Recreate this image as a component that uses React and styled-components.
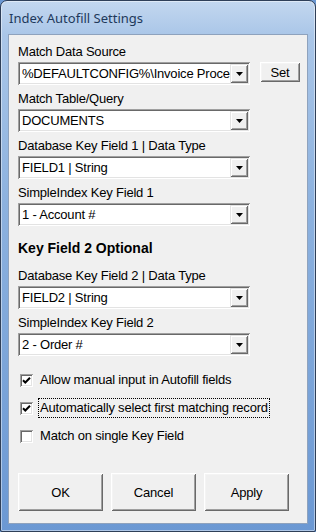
import React from "react";
import styled, { createGlobalStyle } from "styled-components";

const Global = createGlobalStyle`
  html, body { margin: 0; padding: 0; background: #6b98d3; }
  body { font-family: "Liberation Sans", Arial, sans-serif; }
  * { box-sizing: border-box; }
`;

const Window = styled.div`
  width: 316px;
  height: 532px;
  display: flex;
  flex-direction: column;
  border: 1px solid #2f3f58;
  border-radius: 7px 7px 2px 2px;
  background: linear-gradient(to bottom, #c3d7ef 0px, #aac6e8 34px, #8db2df 200px, #6b98d3 532px);
  box-shadow: inset 0 0 0 1px rgba(255, 255, 255, 0.45);
  padding: 0 7px 7px 7px;
  overflow: hidden;
`;

const TitleBar = styled.div`
  height: 33px;
  display: flex;
  align-items: center;
  padding-left: 1px;
  font-family: "Noto Sans", "Open Sans", sans-serif;
  font-size: 13px;
  color: #1e395b;
`;

const Client = styled.div`
  flex: 1;
  display: flex;
  flex-direction: column;
  background: #f0f0f0;
  border: 1px solid #8ea2bd;
  padding: 9px 9px 11px 9px;
  font-size: 13px;
  letter-spacing: -0.2px;
  color: #000;
`;

const Field = styled.div`
  display: flex;
  flex-direction: column;
  margin-top: ${(p) => p.$top ?? 6}px;
`;

const Label = styled.div`
  height: 15px;
  line-height: 15px;
  margin-bottom: 3px;
  white-space: nowrap;
`;

const Heading = styled.div`
  margin-top: 14px;
  height: 16px;
  line-height: 16px;
  font-weight: bold;
  font-size: 14px;
  letter-spacing: 0;
`;

const Row = styled.div`
  display: flex;
  align-items: flex-start;
  gap: 10px;
`;

const ComboBox = styled.div`
  width: 232px;
  height: 23px;
  display: flex;
  padding: 2px;
  background: #fff;
  box-shadow: inset 1px 1px #a0a0a0, inset -1px -1px #ffffff, inset 2px 2px #696969,
    inset -2px -2px #e3e3e3;
`;

const ComboValue = styled.div`
  flex: 1;
  min-width: 0;
  overflow: hidden;
  white-space: nowrap;
  line-height: 19px;
  padding-left: 2px;
`;

const DropButton = styled.div`
  width: 18px;
  height: 19px;
  flex: none;
  display: flex;
  align-items: center;
  justify-content: center;
  background: #f0f0f0;
  box-shadow: inset 1px 1px #e3e3e3, inset -1px -1px #696969, inset 2px 2px #ffffff,
    inset -2px -2px #a0a0a0;
`;

const PushButton = styled.div`
  width: ${(p) => p.$w}px;
  height: ${(p) => p.$h}px;
  flex: none;
  display: flex;
  align-items: center;
  justify-content: center;
  background: #f0f0f0;
  box-shadow: inset 1px 1px #ffffff, inset -1px -1px #696969, inset 2px 2px #f4f4f4,
    inset -2px -2px #a0a0a0;
`;

const Checks = styled.div`
  display: flex;
  flex-direction: column;
  gap: 8px;
  margin-top: 14px;
`;

const CheckRow = styled.div`
  height: 20px;
  display: flex;
  align-items: center;
`;

const Box = styled.div`
  width: 13px;
  height: 13px;
  margin-left: 2px;
  background: #fff;
  display: flex;
  align-items: center;
  justify-content: center;
  box-shadow: inset 1px 1px #a0a0a0, inset -1px -1px #ffffff, inset 2px 2px #696969,
    inset -2px -2px #e3e3e3;
`;

const CheckText = styled.span`
  margin-left: 5px;
  padding: 0 1px;
  height: 20px;
  line-height: 18px;
  border: 1px dotted ${(p) => (p.$focus ? "#000" : "transparent")};
  white-space: nowrap;
`;

const Buttons = styled.div`
  display: flex;
  gap: 8px;
  margin-top: 27px;
`;

const Arrow = () => (
  <svg width="7" height="4" viewBox="0 0 7 4">
    <path d="M0 0H7L3.5 4Z" fill="#000" />
  </svg>
);

const Check = () => (
  <svg width="9" height="9" viewBox="0 0 9 9">
    <path d="M1 4.2L3.3 6.5L8 1.8" fill="none" stroke="#000" strokeWidth="2" />
  </svg>
);

const Combo = ({ value }) => (
  <ComboBox>
    <ComboValue>{value}</ComboValue>
    <DropButton>
      <Arrow />
    </DropButton>
  </ComboBox>
);

const CheckItem = ({ checked, focus, children }) => (
  <CheckRow>
    <Box>{checked && <Check />}</Box>
    <CheckText $focus={focus}>{children}</CheckText>
  </CheckRow>
);

export default function App() {
  return (
    <>
      <Global />
      <Window>
        <TitleBar>Index Autofill Settings</TitleBar>
        <Client>
          <Field $top={0}>
            <Label>Match Data Source</Label>
            <Row>
              <Combo value="%DEFAULTCONFIG%\Invoice Proces" />
              <PushButton $w={40} $h={20}>Set</PushButton>
            </Row>
          </Field>
          <Field>
            <Label>Match Table/Query</Label>
            <Combo value="DOCUMENTS" />
          </Field>
          <Field>
            <Label>Database Key Field 1 | Data Type</Label>
            <Combo value="FIELD1 | String" />
          </Field>
          <Field>
            <Label>SimpleIndex Key Field 1</Label>
            <Combo value="1 - Account #" />
          </Field>
          <Heading>Key Field 2 Optional</Heading>
          <Field $top={12}>
            <Label>Database Key Field 2 | Data Type</Label>
            <Combo value="FIELD2 | String" />
          </Field>
          <Field>
            <Label>SimpleIndex Key Field 2</Label>
            <Combo value="2 - Order #" />
          </Field>
          <Checks>
            <CheckItem checked>Allow manual input in Autofill fields</CheckItem>
            <CheckItem checked focus>Automatically select first matching record</CheckItem>
            <CheckItem>Match on single Key Field</CheckItem>
          </Checks>
          <Buttons>
            <PushButton $w={85} $h={38}>OK</PushButton>
            <PushButton $w={85} $h={38}>Cancel</PushButton>
            <PushButton $w={85} $h={38}>Apply</PushButton>
          </Buttons>
        </Client>
      </Window>
    </>
  );
}
